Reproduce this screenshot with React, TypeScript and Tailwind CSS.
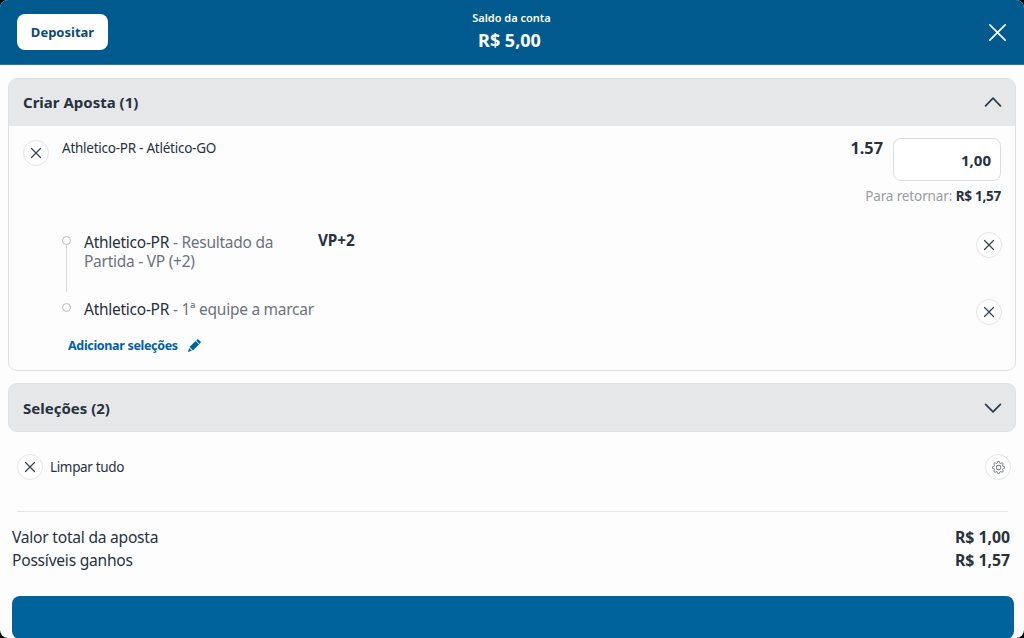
import { BsGear } from "react-icons/bs";

const legs = [
  { team: "Athletico-PR", market: "Resultado da Partida - VP (+2)", tag: "VP+2" },
  { team: "Athletico-PR", market: "1ª equipe a marcar", tag: "" },
];

const totals = [
  { label: "Valor total da aposta", value: "R$ 1,00" },
  { label: "Possíveis ganhos", value: "R$ 1,57" },
];

function Cross({ className }: { className: string }) {
  return (
    <svg viewBox="0 0 10 10" className={className} fill="none" stroke="currentColor" strokeLinecap="round">
      <path d="M0.5 0.5 9.5 9.5M9.5 0.5 0.5 9.5" />
    </svg>
  );
}

function RemoveButton({ label }: { label: string }) {
  return (
    <button
      aria-label={label}
      className="flex h-[26px] w-[26px] shrink-0 items-center justify-center rounded-full border border-[#e3e4e7] bg-white text-[#36414f]"
    >
      <Cross className="h-2.5 w-2.5 overflow-visible stroke-[1.2]" />
    </button>
  );
}

function Chevron({ up = false }: { up?: boolean }) {
  return (
    <svg viewBox="0 0 18 10" className="h-2.5 w-[18px]" fill="none" stroke="#2b3a4b" strokeWidth="1.7" strokeLinecap="round" strokeLinejoin="round">
      <path d={up ? "M1.6 8.8 9 1.2 16.4 8.8" : "M1.6 1.3 9 8.9 16.4 1.3"} />
    </svg>
  );
}

function Pencil() {
  return (
    <svg viewBox="0 0 12 12" className="h-[13px] w-[13px]" fill="#0061a8">
      <path d="M1.4 7.4 7 1.9 10.1 5 4.6 10.5Z" />
      <path d="M1 8.4 3.5 10.9 0 12Z" />
      <path d="M7.5 1.4 8.5 0.4Q9 0 9.5 0.4L11.6 2.4Q12 2.9 11.6 3.4L10.6 4.5Z" />
    </svg>
  );
}

export default function App() {
  return (
    <div className="h-[638px] w-[1024px] overflow-hidden bg-black font-['Noto_Sans',sans-serif] text-[#26323f]">
      <div className="flex h-full flex-col overflow-hidden rounded-lg bg-[#fdfdfd]">
        {/* Header */}
        <header className="grid h-[65px] shrink-0 grid-cols-[1fr_auto_1fr] items-center border-b border-[#2f74a5] bg-[#005a8e] pr-[18px] pl-[17px] text-white">
          <button className="h-9 w-[91px] rounded-lg bg-white pt-px text-[13px] font-bold text-[#0b4a72]">
            Depositar
          </button>
          <div className="flex flex-col items-center pb-[3px]">
            <span className="text-[11px] leading-4 font-semibold">Saldo da conta</span>
            <span className="mt-[3px] pr-1 text-lg leading-[23px] font-bold">R$ 5,00</span>
          </div>
          <button aria-label="Fechar" className="justify-self-end">
            <Cross className="h-[17px] w-[17px] overflow-visible stroke-[1]" />
          </button>
        </header>

        {/* Criar Aposta */}
        <section className="mx-2 mt-[13px] h-[293px] shrink-0 overflow-hidden rounded-[9px] border border-[#e0e1e4]">
          <div className="flex h-[47px] items-center justify-between bg-[#e6e7e9] pr-[13px] pb-px pl-3.5">
            <h2 className="text-[15px] font-bold">Criar Aposta (1)</h2>
            <Chevron up />
          </div>

          <div className="flex h-[105px] items-start px-3.5">
            <div className="mt-[14px]">
              <RemoveButton label="Remover aposta" />
            </div>
            <p className="mt-3 ml-[13px] text-[13.5px] leading-5 tracking-[-0.25px]">Athletico-PR - Atlético-GO</p>
            <div className="ml-auto flex flex-col items-end">
              <div className="mt-3 flex items-start gap-2.5">
                <span className="text-[16.3px] leading-[21px] font-bold">1.57</span>
                <div className="flex h-[43px] w-[108px] items-center justify-end rounded-lg border border-[#dcdde1] bg-white pt-px pr-[9px] text-[15px] font-bold">
                  1,00
                </div>
              </div>
              <p className="mt-[5px] text-[13.5px] leading-5 tracking-[-0.12px] text-[#9a9ca5]">
                Para retornar: <span className="font-bold tracking-[-0.25px] text-[#26323f]">R$ 1,57</span>
              </p>
            </div>
          </div>

          {legs.map((leg, i) => (
            <div key={leg.market} className="flex h-[67px] items-start pr-[13px] pl-[53px]">
              <div className="flex w-[9px] flex-col items-center pt-[5px]">
                <span className="h-[9px] w-[9px] rounded-full border border-[#b9bbc0]" />
                {i === 0 && <span className="h-[47px] w-px bg-[#d9dadd]" />}
              </div>
              <p className="ml-[13px] w-[234px] pt-0.5 pr-10 text-[15.5px] leading-[19px] tracking-[-0.26px] text-[#6c727d] last-of-type:whitespace-nowrap">
                <span className="text-[#26323f]">{leg.team}</span> -{" "}
                {i === 0 ? <>Resultado da<br />Partida - VP (+2)</> : leg.market}
              </p>
              <span className="text-[15.3px] leading-[18px] font-bold tracking-[-0.1px]">{leg.tag}</span>
              <div className="ml-auto pt-[1px]">
                <RemoveButton label="Remover seleção" />
              </div>
            </div>
          ))}

          <div className="-mt-[29px] flex items-center gap-2.5 pl-[59px] text-[#0061a8]">
            <span className="text-[12.5px] leading-5 font-bold tracking-[-0.33px]">Adicionar seleções</span>
            <span className="pb-0.5"><Pencil /></span>
          </div>
        </section>

        {/* Seleções */}
        <section className="mx-2 mt-3 flex h-[49px] shrink-0 items-center justify-between rounded-[9px] border border-[#e0e1e4] bg-[#e6e7e9] pr-[13px] pl-3.5">
          <h2 className="pt-px text-[15px] font-bold">Seleções (2)</h2>
          <Chevron />
        </section>

        <div className="mt-[22px] flex h-[26px] shrink-0 items-center pr-[13px] pl-[17px]">
          <RemoveButton label="Limpar tudo" />
          <span className="ml-[7px] pt-px text-[13.5px] tracking-[-0.35px]">Limpar tudo</span>
          <button
            aria-label="Configurações"
            className="ml-auto flex h-[26px] w-[26px] items-center justify-center rounded-full border border-[#e3e4e7] bg-white text-[#6f7783]"
          >
            <BsGear size={13} />
          </button>
        </div>

        <div className="mt-[31px] mr-4 ml-[17px] h-px shrink-0 bg-[#e6e7e9]" />

        {/* Totais */}
        <dl className="mt-[14px] shrink-0 pr-3.5 pl-3 text-[15.6px] leading-[23px] tracking-[-0.24px]">
          {totals.map((t) => (
            <div key={t.label} className="flex justify-between">
              <dt>{t.label}</dt>
              <dd className="text-[15.8px] font-bold tracking-normal">{t.value}</dd>
            </div>
          ))}
        </dl>

        <button aria-label="Fazer aposta" className="mt-[24px] mr-2.5 ml-3 h-[43px] shrink-0 rounded-lg bg-[#00639c]" />
      </div>
    </div>
  );
}
